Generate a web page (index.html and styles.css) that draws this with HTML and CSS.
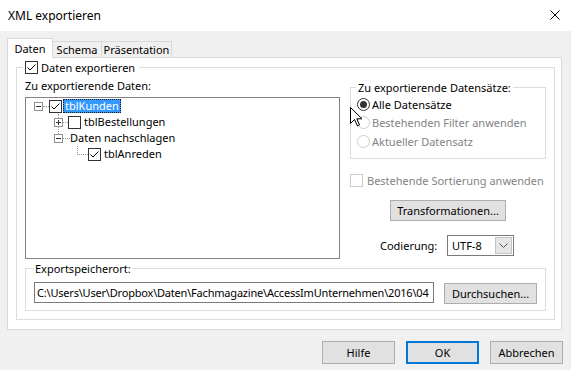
FILE: index.html
```html
<!DOCTYPE html>
<html lang="de">
<head>
  <meta charset="UTF-8">
  <title>XML exportieren</title>
  <link rel="stylesheet" href="styles.css">
</head>
<body>

  <div class="titlebar">
    <span>XML exportieren</span>
    <svg class="close" width="10" height="10" viewBox="0 0 10 10">
      <path d="M0.5 0.5 L9.5 9.5 M9.5 0.5 L0.5 9.5" stroke="#000" stroke-width="1" fill="none"/>
    </svg>
  </div>

  <div class="tabs">
    <div class="tab active">Daten</div>
    <div class="tab schema">Schema</div>
    <div class="tab pres">Präsentation</div>
  </div>

  <div class="panel">
    <div class="group main">
      <div class="legend">
        <svg class="box" width="13" height="13" viewBox="0 0 13 13"><rect x="0.5" y="0.5" width="12" height="12" fill="#fff" stroke="#333"/><path d="M2.5 6.5 L5 9 L10.5 3.5" fill="none" stroke="#000"/></svg>
        <span>Daten exportieren</span>
      </div>

      <div class="upper">
        <div class="left">
          <div class="label">Zu exportierende Daten:</div>
          <div class="tree">
            <div class="node lvl1">
              <span class="exp minus"></span>
              <span class="dash w6"></span>
              <svg class="box" width="13" height="13" viewBox="0 0 13 13"><rect x="0.5" y="0.5" width="12" height="12" fill="#fff" stroke="#333"/><path d="M2.5 6.5 L5 9 L10.5 3.5" fill="none" stroke="#000"/></svg>
              <span class="name selected">tblKunden</span>
            </div>
            <div class="node lvl2">
              <span class="exp plus up short"></span>
              <span class="dash w5"></span>
              <svg class="box" width="13" height="13" viewBox="0 0 13 13"><rect x="0.5" y="0.5" width="12" height="12" fill="#fff" stroke="#333"/></svg>
              <span class="name">tblBestellungen</span>
            </div>
            <div class="node lvl2">
              <span class="exp minus up long"></span>
              <span class="dash w7"></span>
              <span class="name plain">Daten nachschlagen</span>
            </div>
            <div class="node lvl3">
              <span class="elbow"></span>
              <svg class="box" width="13" height="13" viewBox="0 0 13 13"><rect x="0.5" y="0.5" width="12" height="12" fill="#fff" stroke="#333"/><path d="M2.5 6.5 L5 9 L10.5 3.5" fill="none" stroke="#000"/></svg>
              <span class="name">tblAnreden</span>
            </div>
          </div>
        </div>

        <div class="right">
          <div class="group records">
            <div class="legend">Zu exportierende Datensätze:</div>
            <div class="radio">
              <svg width="13" height="13" viewBox="0 0 13 13"><circle cx="6.5" cy="6.5" r="6" fill="#fff" stroke="#333"/><circle cx="6.5" cy="6.5" r="3.5" fill="#333"/></svg>
              <span>Alle Datensätze</span>
            </div>
            <div class="radio disabled">
              <svg width="13" height="13" viewBox="0 0 13 13"><circle cx="6.5" cy="6.5" r="6" fill="#fff" stroke="#ccc"/></svg>
              <span>Bestehenden Filter anwenden</span>
            </div>
            <div class="radio disabled">
              <svg width="13" height="13" viewBox="0 0 13 13"><circle cx="6.5" cy="6.5" r="6" fill="#fff" stroke="#ccc"/></svg>
              <span>Aktueller Datensatz</span>
            </div>
          </div>

          <div class="option disabled">
            <svg width="13" height="13" viewBox="0 0 13 13"><rect x="0.5" y="0.5" width="12" height="12" fill="#fff" stroke="#ccc"/></svg>
            <span>Bestehende Sortierung anwenden</span>
          </div>

          <button class="btn transform">Transformationen...</button>

          <div class="encoding">
            <span class="enc-label">Codierung:</span>
            <div class="combo">
              <span>UTF-8</span>
              <span class="arrow">
                <svg width="9" height="5" viewBox="0 0 9 5"><path d="M0.5 0.5 L4.5 4.5 L8.5 0.5" fill="none" stroke="#555"/></svg>
              </span>
            </div>
          </div>
        </div>
      </div>

      <div class="group export">
        <div class="legend">Exportspeicherort:</div>
        <div class="path-row">
          <div class="path">C:\Users\User\Dropbox\Daten\Fachmagazine\AccessImUnternehmen\2016\04</div>
          <button class="btn browse">Durchsuchen...</button>
        </div>
      </div>
    </div>
  </div>

  <div class="actions">
    <button class="btn">Hilfe</button>
    <button class="btn default">OK</button>
    <button class="btn">Abbrechen</button>
  </div>

  <svg class="cursor" width="13" height="20" viewBox="0 0 13 20">
    <path d="M0.5 0.5 L0.5 16.5 L4.5 12.5 L7.5 19 L9.5 18 L6.8 11.8 L12 11.8 Z" fill="#fff" stroke="#000" stroke-width="1" stroke-linejoin="miter"/>
  </svg>

</body>
</html>
```

FILE: styles.css
```css
body {
  margin: 0;
  width: 571px;
  height: 370px;
  background: #f0f0f0;
  font-family: 'Segoe UI', 'Noto Sans', sans-serif;
  font-size: 11px;
  line-height: 15px;
  color: #000;
  position: relative;
  overflow: hidden;
  white-space: nowrap;
}

svg {
  display: block;
  flex-shrink: 0;
}

.titlebar {
  height: 31px;
  background: #fff;
  display: flex;
  align-items: center;
  justify-content: space-between;
  padding: 0 11px 0 8px;
  font-size: 12px;
}

.close {
  margin-top: -1px;
}

/* tabs */
.tabs {
  display: flex;
  align-items: flex-end;
  height: 20px;
  margin-top: 7px;
  padding-left: 7px;
}

.tab {
  box-sizing: border-box;
  height: 16px;
  margin-bottom: 1px;
  border: 1px solid #d9d9d9;
  border-bottom: none;
  background: #f0f0f0;
  text-align: center;
  line-height: 15px;
}

.tab.active {
  position: relative;
  z-index: 1;
  width: 46px;
  height: 20px;
  margin-bottom: 0;
  background: #fff;
  line-height: 19px;
}

.tab.schema {
  width: 49px;
  border-left: none;
}

.tab.pres {
  width: 70px;
  border-left: none;
}

.panel {
  box-sizing: border-box;
  width: 555px;
  height: 273px;
  margin: -1px 0 0 7px;
  background: #fff;
  border: 1px solid #d9d9d9;
  padding: 9px 0 0 8px;
}

/* group boxes */
.group {
  box-sizing: border-box;
  border: 1px solid #dcdcdc;
}

.legend {
  display: flex;
  align-items: center;
  gap: 3px;
  width: max-content;
  height: 15px;
  margin-top: -8px;
  background: #fff;
}

.main {
  width: 539px;
  height: 253px;
}

.main > .legend {
  margin-left: 6px;
  padding: 0 4px 0 2px;
}

.upper {
  display: grid;
  grid-template-columns: 315px 196px;
  column-gap: 10px;
  margin: 3px 0 0 8px;
}

.tree {
  box-sizing: border-box;
  height: 162px;
  margin-top: 4px;
  border: 1px solid #828282;
}

.node {
  display: flex;
  align-items: center;
  height: 16px;
}

.lvl1 { padding-left: 8px; }
.lvl2 { padding-left: 28px; }
.lvl3 { padding-left: 51px; }

.exp {
  position: relative;
  box-sizing: border-box;
  width: 9px;
  height: 9px;
  border: 1px solid #919191;
}

.exp::after {
  content: "";
  position: absolute;
  left: 1px;
  top: 3px;
  width: 5px;
  height: 1px;
  background: #333;
}

.exp.plus {
  background: linear-gradient(#333, #333) no-repeat 3px 1px / 1px 5px;
}

.exp.up::before {
  content: "";
  position: absolute;
  left: 3px;
  bottom: 100%;
  margin-bottom: 1px;
  border-left: 1px dotted #9a9a9a;
}

.exp.short::before { height: 4px; }
.exp.long::before { height: 8px; }

.dash {
  height: 0;
  border-top: 1px dotted #9a9a9a;
}

.w5 { width: 5px; }
.w6 { width: 6px; }
.w7 { width: 7px; }

.elbow {
  box-sizing: border-box;
  align-self: flex-start;
  width: 11px;
  height: 9px;
  border-left: 1px dotted #9a9a9a;
  border-bottom: 1px dotted #9a9a9a;
}

.name {
  margin-left: 1px;
  padding: 0 2px;
  line-height: 14px;
}

.name.plain {
  margin-left: 0;
  padding: 0;
}

.name.selected {
  background: #3399ff;
  color: #fff;
  outline: 1px dotted #1a1a1a;
  outline-offset: -1px;
}

/* right column */
.right {
  display: flex;
  flex-direction: column;
}

.records {
  height: 72px;
  margin-top: 9px;
  padding-left: 6px;
}

.records .legend {
  margin-left: -1px;
  padding: 0 2px;
}

.radio,
.option {
  display: flex;
  align-items: center;
  gap: 2px;
  height: 18.5px;
}

.records .radio:first-of-type {
  margin-top: 4px;
}

.disabled {
  color: #838383;
}

.option {
  gap: 4px;
  height: 15px;
  margin-top: 14px;
}

.btn {
  box-sizing: border-box;
  width: 73px;
  height: 23px;
  padding: 0;
  font: inherit;
  color: #000;
  background: #e1e1e1;
  border: 1px solid #adadad;
}

.btn.default {
  border: 2px solid #0078d7;
}

.transform {
  align-self: center;
  width: 116px;
  height: 21px;
  margin-top: 12px;
}

.encoding {
  display: flex;
  align-items: center;
  margin: 14px 0 0 30px;
}

.enc-label {
  width: 67px;
}

.combo {
  box-sizing: border-box;
  display: flex;
  align-items: center;
  justify-content: space-between;
  width: 67px;
  height: 21px;
  padding: 0 1px 0 4px;
  border: 1px solid #7a7a7a;
}

.arrow {
  box-sizing: border-box;
  display: flex;
  align-items: center;
  justify-content: center;
  width: 17px;
  height: 17px;
  background: #e6e6e6;
  border: 1px solid #c4c4c4;
}

/* export location */
.export {
  width: 521px;
  height: 43px;
  margin: 9px 0 0 8px;
  padding-left: 8px;
}

.export .legend {
  padding: 0 1px;
}

.path-row {
  display: flex;
  align-items: center;
  gap: 10px;
  margin-top: 5px;
}

.path {
  box-sizing: border-box;
  width: 400px;
  height: 21px;
  padding: 2px 1px 0 2px;
  border: 1px solid #7a7a7a;
  letter-spacing: -0.2px;
  overflow: hidden;
}

.browse {
  width: 93px;
  height: 21px;
  margin-top: 2px;
}

/* dialog buttons */
.actions {
  display: flex;
  justify-content: flex-end;
  gap: 11px;
  margin-top: 11px;
  padding-right: 8px;
}

.cursor {
  position: absolute;
  left: 350px;
  top: 107px;
}
```
